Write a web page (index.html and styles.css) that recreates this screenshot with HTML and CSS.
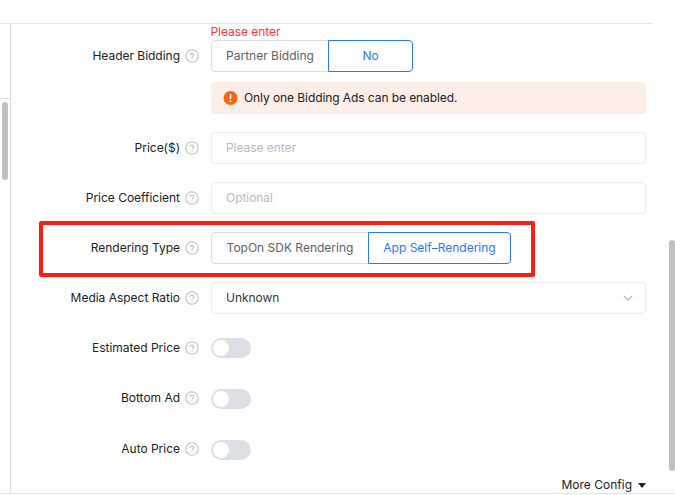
FILE: index.html
```html
<!DOCTYPE html>
<html lang="en">

<head>
    <meta charset="UTF-8">
    <meta name="viewport" content="width=device-width, initial-scale=1.0">
    <title>Ad Source</title>
    <link rel="stylesheet" href="styles.css">
</head>

<body>
    <svg class="symbols" width="0" height="0">
        <symbol id="help" viewBox="0 0 14 14">
            <circle cx="7" cy="7" r="6.2" fill="none" stroke="#c0c0c0" stroke-width="1.1" />
            <path d="M5.2 5.7C5.2 4.6 6 4 7 4s1.8.6 1.8 1.6C8.8 6.8 7 6.9 7 8.3" fill="none" stroke="#bbb" stroke-width="1.1" />
            <circle cx="7" cy="9.9" r=".7" fill="#bbb" />
        </symbol>
    </svg>

    <div class="topbar"></div>
    <div class="body">
        <div class="side">
            <div class="side-head"></div>
            <div class="side-thumb"></div>
        </div>
        <div class="form">
            <div class="error">Please enter</div>
            <div class="row">
                <div class="label"><span>Header Bidding</span><svg class="help"><use href="#help" /></svg></div>
                <div class="radio">
                    <span class="radio-item partner">Partner Bidding</span>
                    <span class="radio-item no current">No</span>
                </div>
            </div>
            <div class="alert">
                <svg class="alert-icon" viewBox="0 0 14 14">
                    <circle cx="7" cy="7" r="7" fill="#f76414" />
                    <path d="M7 3v5" stroke="#fff" stroke-width="1.6" />
                    <circle cx="7" cy="10.2" r=".9" fill="#fff" />
                </svg>
                <span>Only one Bidding Ads can be enabled.</span>
            </div>
            <div class="row">
                <div class="label"><span>Price($)</span><svg class="help"><use href="#help" /></svg></div>
                <input class="input" type="text" placeholder="Please enter">
            </div>
            <div class="row">
                <div class="label"><span>Price Coefficient</span><svg class="help"><use href="#help" /></svg></div>
                <input class="input" type="text" placeholder="Optional">
            </div>
            <div class="row marked">
                <div class="label"><span>Rendering Type</span><svg class="help"><use href="#help" /></svg></div>
                <div class="radio">
                    <span class="radio-item topon">TopOn SDK Rendering</span>
                    <span class="radio-item self current">App Self–Rendering</span>
                </div>
            </div>
            <div class="row">
                <div class="label"><span>Media Aspect Ratio</span><svg class="help"><use href="#help" /></svg></div>
                <div class="input select">
                    <span>Unknown</span>
                    <svg class="arrow" viewBox="0 0 10 6"><path d="M.8.8L5 5L9.2.8" fill="none" stroke="#b4b4b4" stroke-width="1.2" /></svg>
                </div>
            </div>
            <div class="row">
                <div class="label"><span>Estimated Price</span><svg class="help"><use href="#help" /></svg></div>
                <div class="switch"></div>
            </div>
            <div class="row row-bottom">
                <div class="label"><span>Bottom Ad</span><svg class="help"><use href="#help" /></svg></div>
                <div class="switch"></div>
            </div>
            <div class="row row-auto">
                <div class="label"><span>Auto Price</span><svg class="help"><use href="#help" /></svg></div>
                <div class="switch"></div>
            </div>
            <div class="more">
                <span>More Config</span>
                <i class="caret"></i>
            </div>
        </div>
        <div class="scroll">
            <div class="scroll-thumb"></div>
        </div>
    </div>
</body>

</html>
```

FILE: styles.css
```css
* {
    margin: 0;
    padding: 0;
    box-sizing: border-box;
}

body {
    width: 675px;
    height: 495px;
    overflow: hidden;
    background: #fff;
    color: #202127;
    font: 12px/18px Inter, "Liberation Sans", sans-serif;
}

.symbols {
    position: absolute;
}

.topbar {
    width: 653px;
    height: 24px;
    border-bottom: 1px solid #e6e6e9;
}

.body {
    display: flex;
    height: 470px;
    border-bottom: 1px solid #e3e3e5;
}

.side {
    width: 11px;
    border-right: 1px solid #dcdce5;
}

.side-head {
    height: 75px;
    border-bottom: 1px solid #dcdce5;
}

.side-thumb {
    width: 6px;
    height: 78px;
    margin: 3px 0 0 2px;
    border-radius: 3px;
    background: #c1c1c1;
}

.form {
    width: 635px;
}

.error {
    height: 16px;
    padding-left: 199.5px;
    line-height: 16px;
    letter-spacing: -0.05px;
    color: #f5393d;
}

.row {
    display: flex;
    align-items: center;
    height: 32px;
    margin-bottom: 18px;
}

.label {
    display: flex;
    align-items: center;
    justify-content: flex-end;
    width: 187.5px;
    margin-right: 12.5px;
    letter-spacing: -0.02px;
    white-space: nowrap;
}

.help {
    flex: none;
    width: 14px;
    height: 14px;
    margin-left: 4.5px;
}

.radio {
    display: flex;
    height: 32px;
}

.radio-item {
    height: 32px;
    border: 1px solid #dcdee6;
    line-height: 30px;
    text-align: center;
    white-space: nowrap;
    color: #5e6066;
}

.radio-item:first-child {
    border-right: 0;
    border-radius: 4px 0 0 4px;
}

.radio-item:last-child {
    border-radius: 0 4px 4px 0;
}

.radio-item.current {
    border-color: #2878ff;
    color: #2878ff;
}

.partner {
    width: 117px;
}

.no {
    width: 85px;
}

.topon {
    width: 157px;
}

.self {
    width: 143px;
}

.alert {
    display: flex;
    align-items: center;
    height: 32px;
    margin: -8px 0 18px 200px;
    padding-left: 12px;
    border-radius: 4px;
    background: #feeee8;
    letter-spacing: -0.08px;
}

.alert-icon {
    width: 15px;
    height: 14px;
    margin-right: 6px;
}

.input {
    flex: 1;
    height: 32px;
    padding: 0 14px 1px;
    border: 1px solid #ebebf0;
    border-radius: 4px;
    background: #fff;
    color: #36373c;
    font: inherit;
    letter-spacing: -0.05px;
}

.input::placeholder {
    color: #b8b9be;
    opacity: 1;
}

.select {
    display: flex;
    align-items: center;
    justify-content: space-between;
    padding: 0 12px 0 14px;
}

.arrow {
    width: 10px;
    height: 6px;
}

/* highlight frame around the row */
.marked {
    position: relative;
}

.marked::after {
    content: "";
    position: absolute;
    top: -11px;
    left: 28px;
    width: 488px;
    height: 48px;
    border: 4px solid #ff1d12;
    border-radius: 2px;
}

.switch {
    width: 40px;
    height: 20px;
    padding: 2px;
    border-radius: 10px;
    background: #dcdfe6;
}

.switch::before {
    content: "";
    display: block;
    width: 16px;
    height: 16px;
    border-radius: 50%;
    background: #fff;
}

.row-bottom .switch,
.row-auto .switch {
    margin-top: 2px;
}

.row-bottom {
    margin-bottom: 19px;
}

.row-auto {
    margin-bottom: 10px;
}

.more {
    display: flex;
    align-items: center;
    justify-content: flex-end;
    height: 20px;
}

.caret {
    margin-left: 6px;
    border: 4px solid transparent;
    border-top: 5px solid #202127;
    border-bottom: 0;
}

.scroll {
    padding: 216px 0 0 23px;
}

.scroll-thumb {
    width: 6px;
    height: 231px;
    border-radius: 3px;
    background: #c1c1c1;
}
```
